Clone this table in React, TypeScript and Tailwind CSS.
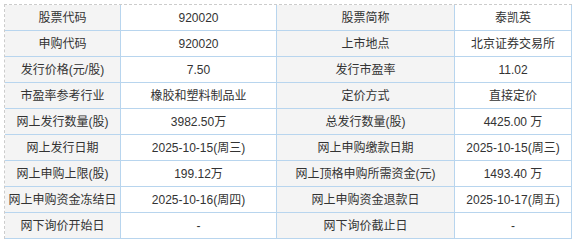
import React from "react";

const rows: [string, string, string, string][] = [
  ["股票代码", "920020", "股票简称", "泰凯英"],
  ["申购代码", "920020", "上市地点", "北京证券交易所"],
  ["发行价格(元/股)", "7.50", "发行市盈率", "11.02"],
  ["市盈率参考行业", "橡胶和塑料制品业", "定价方式", "直接定价"],
  ["网上发行数量(股)", "3982.50万", "总发行数量(股)", "4425.00 万"],
  ["网上发行日期", "2025-10-15(周三)", "网上申购缴款日期", "2025-10-15(周三)"],
  ["网上申购上限(股)", "199.12万", "网上顶格申购所需资金(元)", "1493.40 万"],
  ["网上申购资金冻结日", "2025-10-16(周四)", "网上申购资金退款日", "2025-10-17(周五)"],
  ["网下询价开始日", "-", "网下询价截止日", "-"],
];

export default function App() {
  return (
    <div className="w-[575px] h-[245px] bg-white pt-[4px] pl-[4px]">
      <div
        className="w-[568px] border-l border-t border-dashed border-[#cccccc] grid grid-cols-[116px_156px_178px_117px] text-[12px] text-[#333333]"
        style={{ fontFamily: '"Liberation Sans", Arial, "Noto Sans CJK SC", sans-serif' }}
      >
        {rows.map((r, i) => (
          <React.Fragment key={i}>
            <div className="h-[26px] flex items-center justify-center bg-[#f4f4f4] border-r border-b border-[#b8d5ee] whitespace-nowrap">
              {r[0]}
            </div>
            <div className="h-[26px] flex items-center justify-center bg-white border-r border-b border-[#b8d5ee] whitespace-nowrap">
              {r[1]}
            </div>
            <div className="h-[26px] flex items-center justify-center bg-[#f4f4f4] border-r border-b border-[#b8d5ee] whitespace-nowrap">
              {r[2]}
            </div>
            <div className="h-[26px] flex items-center justify-center bg-white border-r border-b border-[#b8d5ee] whitespace-nowrap">
              {r[3]}
            </div>
          </React.Fragment>
        ))}
      </div>
    </div>
  );
}
